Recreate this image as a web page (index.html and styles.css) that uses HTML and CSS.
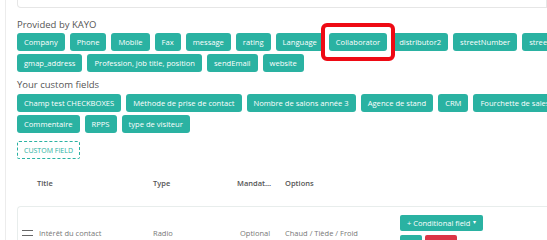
FILE: index.html
```html
<!DOCTYPE html>
<html lang="fr">
<head>
  <meta charset="UTF-8" />
  <title>Champs du contact</title>
  <link rel="stylesheet" href="styles.css">
</head>
<body>
  <div class="side"></div>
  <div class="main">
    <div class="top-box"></div>

    <div class="group-label">Provided by KAYO</div>
    <div class="chips">
      <div class="chip-row">
        <span class="chip">Company</span>
        <span class="chip">Phone</span>
        <span class="chip">Mobile</span>
        <span class="chip">Fax</span>
        <span class="chip">message</span>
        <span class="chip">rating</span>
        <span class="chip">Language</span>
        <span class="chip highlighted">Collaborator</span>
        <span class="chip">distributor2</span>
        <span class="chip">streetNumber</span>
        <span class="chip">streetName</span>
      </div>
      <div class="chip-row">
        <span class="chip">gmap_address</span>
        <span class="chip">Profession, job title, position</span>
        <span class="chip">sendEmail</span>
        <span class="chip">website</span>
      </div>
    </div>

    <div class="group-label">Your custom fields</div>
    <div class="chips">
      <div class="chip-row">
        <span class="chip">Champ test CHECKBOXES</span>
        <span class="chip">Méthode de prise de contact</span>
        <span class="chip">Nombre de salons année 3</span>
        <span class="chip">Agence de stand</span>
        <span class="chip">CRM</span>
        <span class="chip">Fourchette de sales size</span>
      </div>
      <div class="chip-row">
        <span class="chip">Commentaire</span>
        <span class="chip">RPPS</span>
        <span class="chip">type de visiteur</span>
      </div>
    </div>

    <button class="add-field">CUSTOM FIELD</button>

    <div class="table-head">
      <div>Title</div>
      <div>Type</div>
      <div>Mandat...</div>
      <div>Options</div>
    </div>

    <div class="table-body">
      <div class="row">
        <div class="title-cell"><span class="handle"></span>Intérêt du contact</div>
        <div>Radio</div>
        <div class="opt">Optional</div>
        <div>Chaud / Tiède / Froid</div>
        <div class="actions">
          <button class="btn-cond">+ Conditional field <span class="caret">▾</span></button>
          <div class="small-btns">
            <button class="btn-edit">Edit</button>
            <button class="btn-delete">Delete</button>
          </div>
        </div>
      </div>
    </div>
  </div>
</body>
</html>
```

FILE: styles.css
```css
body {
  margin: 0;
  font-family: 'Open Sans', 'Noto Sans', sans-serif;
  background: #ffffff;
  display: flex;
  height: 240px;
  overflow: hidden;
}

.side {
  width: 5px;
  flex: none;
  border-right: 1px solid #ececec;
}

.main {
  flex: 1;
  min-width: 0;
  padding-left: 11px;
}

.top-box {
  height: 8px;
  border: 1px solid #e6e6e6;
  border-top: none;
  border-radius: 0 0 0 4px;
  box-sizing: border-box;
}

.group-label {
  font-size: 9.5px;
  color: #555;
  line-height: 12px;
  margin-top: 11px;
  margin-bottom: 2px;
}

.chips {
  display: flex;
  flex-direction: column;
  gap: 3px;
}

.chip-row {
  display: flex;
  gap: 5px;
  white-space: nowrap;
}

.chip {
  display: inline-flex;
  align-items: center;
  flex: none;
  height: 18px;
  padding: 0 7px;
  background: #2ab2a2;
  color: #fff;
  font-size: 7.6px;
  font-weight: 500;
  border-radius: 3px;
}

.highlighted {
  position: relative;
}

.highlighted::after {
  content: '';
  position: absolute;
  left: -8px;
  right: -8px;
  top: -10px;
  bottom: -10px;
  border: 4px solid #ee0a14;
  border-radius: 6px;
}

.chips + .group-label {
  margin-top: 7px;
  margin-bottom: 3px;
}

.add-field {
  display: block;
  margin-top: 8px;
  height: 18px;
  width: 63px;
  padding: 0;
  background: #fff;
  border: 1.5px dashed #2ab2a2;
  border-radius: 2px;
  color: #2ab2a2;
  font-family: inherit;
  font-size: 7px;
}

.table-head {
  display: grid;
  grid-template-columns: 116px 84px 48px 115px 1fr;
  padding-left: 20px;
  height: 47px;
  align-items: center;
  font-size: 7.5px;
  font-weight: 600;
  color: #555;
}

.table-body {
  border: 1px solid #e8edec;
  border-right: none;
  border-radius: 4px 0 0 0;
  height: 60px;
}

.row {
  display: grid;
  grid-template-columns: 131px 84px 48px 115px 1fr;
  align-items: center;
  padding: 8px 0 0 4px;
  font-size: 7.5px;
  color: #777;
}

.title-cell {
  display: flex;
  align-items: center;
  gap: 6px;
}

.handle {
  width: 11px;
  height: 4px;
  border-top: 1px solid #666;
  border-bottom: 1px solid #666;
}

.opt {
  padding-left: 3px;
}

.actions {
  display: flex;
  flex-direction: column;
  gap: 4px;
}

.actions button {
  border: none;
  color: #fff;
  font-family: inherit;
  font-size: 7.5px;
  font-weight: 500;
  border-radius: 2px;
  height: 16px;
  padding: 0 7px;
}

.btn-cond {
  width: 83px;
  text-align: left;
  background: #2ab2a2;
}

.caret {
  float: right;
  font-size: 6px;
}

.small-btns {
  display: flex;
  gap: 3px;
}

.actions .btn-edit {
  width: 22px;
  padding: 0;
  background: #2ab2a2;
}

.actions .btn-delete {
  width: 32px;
  padding: 0;
  background: #dc3545;
}
```
